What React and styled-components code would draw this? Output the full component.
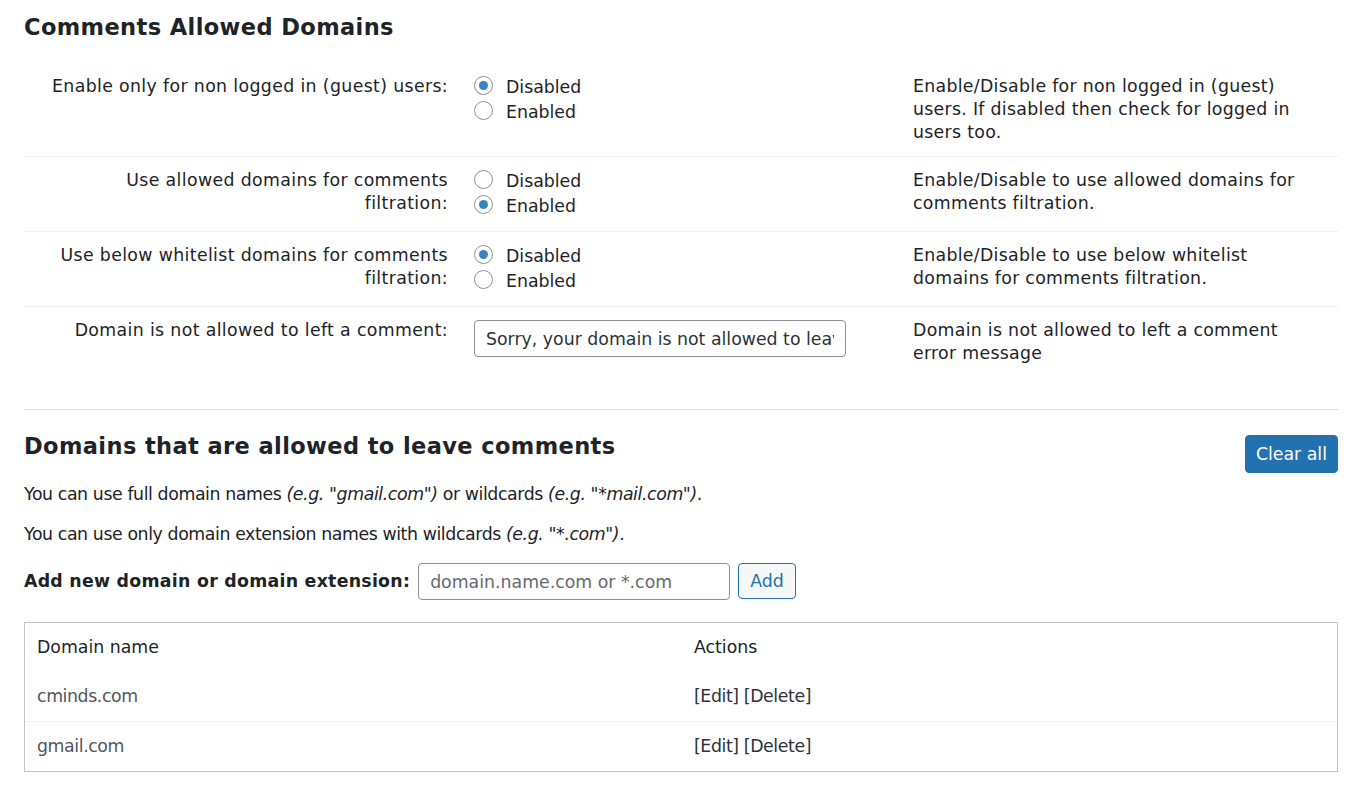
import React from "react";
import styled, { createGlobalStyle } from "styled-components";

const Global = createGlobalStyle`
  html, body { margin: 0; padding: 0; background: #fff; }
  body {
    font-family: "DejaVu Sans", Verdana, sans-serif;
    font-size: 17.33px;
    line-height: 23px;
    color: #1d2327;
  }
  * { box-sizing: border-box; }
`;

const Page = styled.div`
  padding: 13px 22px 0 24px;
  width: 1360px;
`;

const Title = styled.h2`
  margin: 0;
  font-size: 22.5px;
  line-height: 29px;
  font-weight: 700;
  letter-spacing: 0.4px;
  color: #1d2327;
`;

const FormTable = styled.div`
  margin-top: 21px;
  display: flex;
  flex-direction: column;
`;

const Row = styled.div`
  display: grid;
  grid-template-columns: 438px 438px 438px;
  border-top: ${(p) => (p.$first ? "none" : "1px solid #f0f0f1")};
`;

const LabelCell = styled.div`
  padding: 12px 14px 12px 24px;
  text-align: right;
  letter-spacing: 0.36px;
`;

const FieldCell = styled.div`
  padding: 12px 13px 12px 12px;
`;

const DescCell = styled.div`
  padding: 12px 30px 12px 13px;
  letter-spacing: 0.3px;
`;

const RadioGroup = styled.div`
  display: flex;
  flex-direction: column;
`;

const RadioItem = styled.label`
  display: flex;
  align-items: center;
  height: 25px;
  gap: 13px;
`;

const RadioCircle = styled.span`
  width: 19px;
  height: 19px;
  border-radius: 50%;
  border: 1px solid #8c8f94;
  background: #fff;
  display: flex;
  align-items: center;
  justify-content: center;
  margin-top: -4px;
  flex-shrink: 0;
  &::after {
    content: "";
    width: 9px;
    height: 9px;
    border-radius: 50%;
    background: ${(p) => (p.$checked ? "#3582c4" : "transparent")};
  }
`;

const TextInput = styled.input`
  font-family: "DejaVu Sans", Verdana, sans-serif;
  font-size: 17.33px;
  color: #2c3338;
  height: 37px;
  width: ${(p) => p.$width}px;
  padding: 0 11px;
  border: 1px solid #8c8f94;
  border-radius: 4px;
  background: #fff;
  margin-top: 1px;
  outline: none;
  &::placeholder { color: #646970; }
`;

const Divider = styled.hr`
  margin: 32px 0 0;
  border: 0;
  border-top: 1px solid #dcdcde;
  height: 0;
`;

const SectionHead = styled.div`
  display: flex;
  justify-content: space-between;
  align-items: flex-start;
  margin-top: 22px;
`;

const PrimaryButton = styled.button`
  font-family: "DejaVu Sans", Verdana, sans-serif;
  font-size: 17.33px;
  height: 38px;
  padding: 0 10px;
  margin-top: 3px;
  color: #fff;
  background: #2271b1;
  border: 1px solid #2271b1;
  border-radius: 4px;
  cursor: pointer;
`;

const Para = styled.p`
  margin: ${(p) => p.$mt}px 0 0;
  letter-spacing: -0.4px;
`;

const AddRow = styled.div`
  display: flex;
  align-items: center;
  margin-top: 16px;
  gap: 8px;
`;

const AddLabel = styled.label`
  font-weight: 700;
  letter-spacing: 0.28px;
`;

const SecondaryButton = styled.button`
  font-family: "DejaVu Sans", Verdana, sans-serif;
  font-size: 17.33px;
  height: 36px;
  padding: 0 11px;
  color: #2271b1;
  background: #f6f7f7;
  border: 1px solid #2271b1;
  border-radius: 4px;
`;

const DomainTable = styled.div`
  margin-top: 22px;
  border: 1px solid #c3c4c7;
  width: 1314px;
`;

const TRow = styled.div`
  display: grid;
  grid-template-columns: 657px 1fr;
  border-top: ${(p) => (p.$sep ? "1px solid #f0f0f1" : "none")};
`;

const TCell = styled.div`
  padding: 13px 12px;
  color: ${(p) => p.$color || "#1d2327"};
  letter-spacing: ${(p) => (p.$tight ? "-0.4px" : "0")};
`;

const settings = [
  {
    label: "Enable only for non logged in (guest) users:",
    value: 0,
    desc: "Enable/Disable for non logged in (guest) users. If disabled then check for logged in users too.",
  },
  {
    label: "Use allowed domains for comments filtration:",
    value: 1,
    desc: "Enable/Disable to use allowed domains for comments filtration.",
  },
  {
    label: "Use below whitelist domains for comments filtration:",
    value: 0,
    desc: "Enable/Disable to use below whitelist domains for comments filtration.",
  },
];

const domains = ["cminds.com", "gmail.com"];

export default function App() {
  return (
    <>
      <Global />
      <Page>
        <Title>Comments Allowed Domains</Title>
        <FormTable>
          {settings.map((s, i) => (
            <Row key={i} $first={i === 0}>
              <LabelCell>{s.label}</LabelCell>
              <FieldCell>
                <RadioGroup>
                  {["Disabled", "Enabled"].map((opt, j) => (
                    <RadioItem key={opt}>
                      <RadioCircle $checked={s.value === j} />
                      {opt}
                    </RadioItem>
                  ))}
                </RadioGroup>
              </FieldCell>
              <DescCell>{s.desc}</DescCell>
            </Row>
          ))}
          <Row>
            <LabelCell>Domain is not allowed to left a comment:</LabelCell>
            <FieldCell>
              <TextInput
                $width={372}
                defaultValue="Sorry, your domain is not allowed to leave a comment."
              />
            </FieldCell>
            <DescCell>Domain is not allowed to left a comment error message</DescCell>
          </Row>
        </FormTable>
        <Divider />
        <SectionHead>
          <Title>Domains that are allowed to leave comments</Title>
          <PrimaryButton>Clear all</PrimaryButton>
        </SectionHead>
        <Para $mt={10}>
          You can use full domain names <em>(e.g. "gmail.com")</em> or wildcards{" "}
          <em>(e.g. "*mail.com")</em>.
        </Para>
        <Para $mt={17}>
          You can use only domain extension names with wildcards <em>(e.g. "*.com")</em>.
        </Para>
        <AddRow>
          <AddLabel>Add new domain or domain extension:</AddLabel>
          <TextInput $width={312} placeholder="domain.name.com or *.com" />
          <SecondaryButton>Add</SecondaryButton>
        </AddRow>
        <DomainTable>
          <TRow>
            <TCell>Domain name</TCell>
            <TCell>Actions</TCell>
          </TRow>
          {domains.map((d, i) => (
            <TRow key={d} $sep={i > 0}>
              <TCell $color="#50575e" $tight>{d}</TCell>
              <TCell $color="#2c3338" $tight>[Edit] [Delete]</TCell>
            </TRow>
          ))}
        </DomainTable>
      </Page>
    </>
  );
}
